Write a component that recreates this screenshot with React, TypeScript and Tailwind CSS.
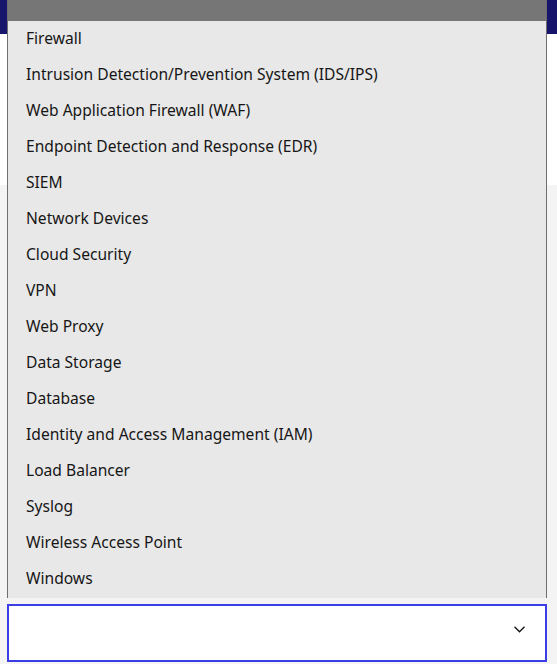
const items = [
  'Firewall',
  'Intrusion Detection/Prevention System (IDS/IPS)',
  'Web Application Firewall (WAF)',
  'Endpoint Detection and Response (EDR)',
  'SIEM',
  'Network Devices',
  'Cloud Security',
  'VPN',
  'Web Proxy',
  'Data Storage',
  'Database',
  'Identity and Access Management (IAM)',
  'Load Balancer',
  'Syslog',
  'Wireless Access Point',
  'Windows',
];

export default function App() {
  return (
    <div
      className="relative h-[664px] w-[557px] overflow-hidden flex flex-col bg-[#f4f4f4] text-[#161616]"
      style={{ fontFamily: '"Noto Sans", "Open Sans", sans-serif' }}
    >
      <div className="h-[34px] bg-[#17146b]" />
      <div className="h-[151px] bg-white" />
      <div className="flex-1 flex flex-col justify-end px-[7px] pb-[2px] pr-[10px]">
        <div className="h-[58px] w-[540px] bg-white border-2 border-[#3b3de6] flex items-center justify-end pr-[20px] pb-[8px]">
          <svg width="11" height="7" viewBox="0 0 11 7" fill="none" stroke="#161616" strokeWidth="1.4">
            <polyline points="0.5,0.8 5.5,5.8 10.5,0.8" />
          </svg>
        </div>
      </div>

      {/* open menu */}
      <div className="absolute left-[7px] top-0 w-[540px] h-[598px] flex flex-col bg-[#e8e8e8] border-x border-[#6f6f6f]">
        <div className="h-[21px] bg-[#767676]" />
        {items.map((it) => (
          <div key={it} className="h-[36px] flex items-center pl-[18px] pb-[1px] text-[15.6px] leading-none">
            {it}
          </div>
        ))}
      </div>
    </div>
  );
}
